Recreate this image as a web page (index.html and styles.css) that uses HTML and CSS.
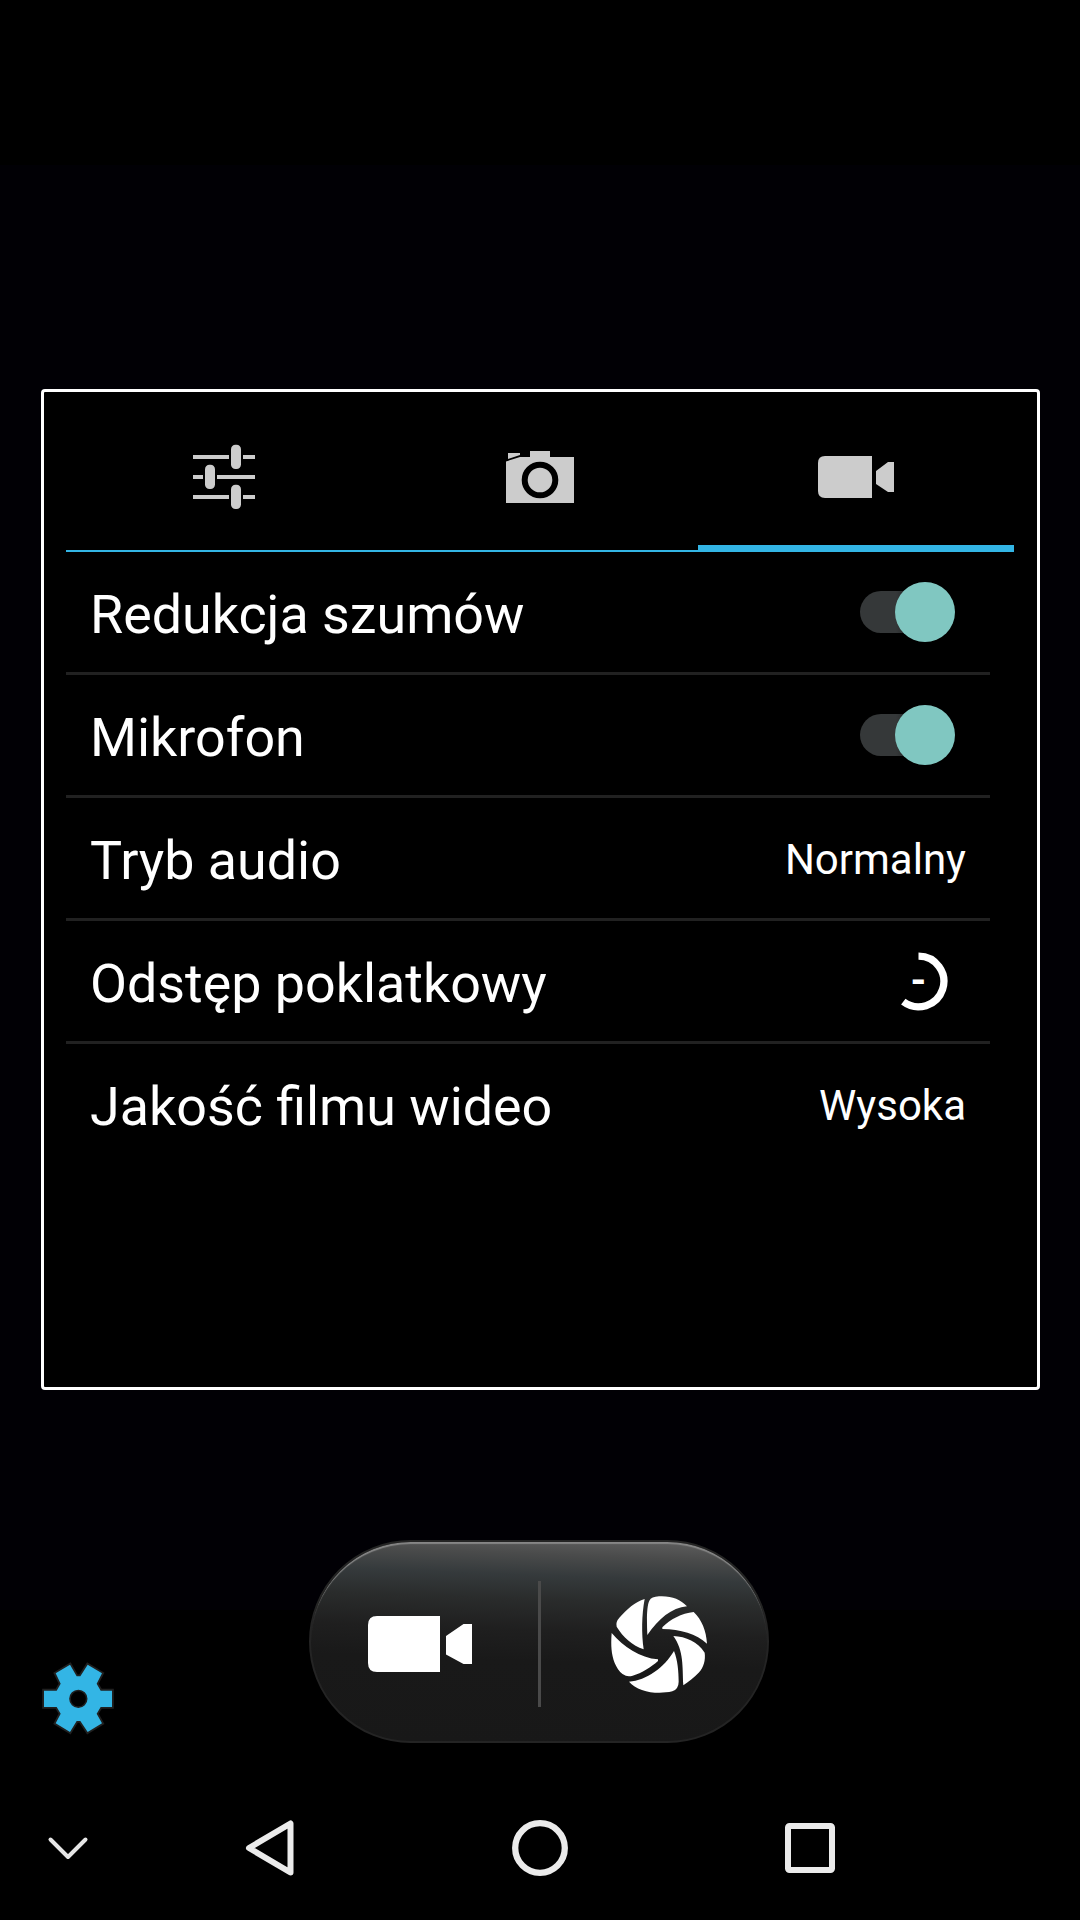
FILE: index.html
```html
<!DOCTYPE html>
<html lang="pl">
<head>
    <meta charset="UTF-8">
    <meta name="viewport" content="width=device-width, initial-scale=1.0">
    <title>Aparat</title>
    <link rel="stylesheet" href="styles.css">
</head>
<body>
    <main class="camera">
        <section class="panel">
            <div class="tabs">
                <div class="tab">
                    <svg width="62" height="66" viewBox="0 0 62 66" fill="#cccccc">
                        <path d="M0 11h36v4H0zM50 11h12v4H50zM0 31h10v4H0zM24 31h38v4H24zM0 51h36v4H0zM50 51h12v4H50z"/>
                        <rect x="38" y="0.7" width="10" height="24.3" rx="4.5"/>
                        <rect x="12" y="20.7" width="10" height="24.3" rx="4.5"/>
                        <rect x="38" y="40.7" width="10" height="24.3" rx="4.5"/>
                    </svg>
                </div>
                <div class="tab">
                    <svg class="photo" width="68" height="52" viewBox="0 0 68 52" fill="#cccccc">
                        <path d="M2 2h12v2L2 8zM0 10.500L14 6H24V0H44V6H68V52H0z"/>
                        <circle cx="34" cy="29" r="15.300" stroke="#000" stroke-width="6"/>
                    </svg>
                </div>
                <div class="tab active">
                    <svg width="76" height="42" viewBox="0 0 76 42" fill="#cccccc">
                        <path d="M7 0H54V42H7Q0 42 0 35V7Q0 0 7 0zM58 15L70 6H76V36H70L58 28z"/>
                    </svg>
                </div>
            </div>
            <div class="settings">
                <div class="row">
                    <span class="label">Redukcja szumów</span>
                    <span class="toggle"><span class="thumb"></span></span>
                </div>
                <div class="row">
                    <span class="label">Mikrofon</span>
                    <span class="toggle"><span class="thumb"></span></span>
                </div>
                <div class="row">
                    <span class="label">Tryb audio</span>
                    <span class="value">Normalny</span>
                </div>
                <div class="row">
                    <span class="label">Odstęp poklatkowy</span>
                    <svg class="dial" width="60" height="60" viewBox="0 0 60 60">
                        <path d="M30.500 5.200A25.300 25.300 0 1 1 15.300 50.700" fill="none" stroke="#fff" stroke-width="7.300"/>
                        <text class="dial-text" x="30.300" y="43" text-anchor="middle">-</text>
                    </svg>
                </div>
                <div class="row">
                    <span class="label">Jakość filmu wideo</span>
                    <span class="value">Wysoka</span>
                </div>
            </div>
        </section>

        <div class="controls">
            <svg class="gear" width="73" height="73" viewBox="66 66 219 219">
                <path d="M72 152H110L122 131L107 100L150 74L170 109H181L203 74L246 100L230 131L242 152H276V201H242L230 221L246 250L203 276L181 243H170L150 276L107 250L122 221L110 201H72z" fill="#33b5e5" stroke="#202020" stroke-width="11" paint-order="stroke"/>
                <circle cx="175" cy="176.500" r="25" fill="#000" stroke="#202020" stroke-width="5"/>
            </svg>
            <div class="shutter">
                <svg class="record" width="104" height="56" viewBox="0 0 104 56" fill="#fff">
                    <path d="M9 0H72V56H9Q0 56 0 47V9Q0 0 9 0zM78 20L95.500 8H104V48H95.500L78 38.500z"/>
                </svg>
                <span class="divider"></span>
                <svg class="aperture" width="96" height="97" viewBox="243 228 288 291" fill="#fff">
                    <path d="M352 345C350 300 350 258 358 242Q364 230 387 229C425 227 450 238 471 259C425 263 385 297 352 345z"/>
                    <path d="M397 322C420 298 455 280 491 276C515 299 529 332 531 371C499 342 452 328 397 327z"/>
                    <path d="M430 348C468 350 503 365 524 398C527 420 521 442 506 458C492 473 476 485 460 496C457 440 462 392 430 348z"/>
                    <path d="M432 393C443 420 446 455 446 485Q446 507 427 514C380 525 322 515 297 485C350 481 402 443 432 393z"/>
                    <path d="M245 339C280 380 330 414 384 418V423C365 440 335 460 308 467Q282 475 264 448C243 415 242 378 245 339z"/>
                    <path d="M344 237C335 285 334 340 341 388C307 377 279 351 260 320Q256 306 268 293C290 269 315 245 344 237z"/>
                </svg>
            </div>
        </div>

        <nav class="navbar">
            <svg width="44" height="26" viewBox="0 0 44 26" fill="none" stroke="#e6e6e6" stroke-width="4" stroke-linecap="round" stroke-linejoin="round">
                <path d="M4.500 4.500L22 22L39.500 4.500"/>
            </svg>
            <svg width="50" height="58" viewBox="0 0 50 58" fill="none" stroke="#ebebeb" stroke-width="6" stroke-linejoin="round">
                <path d="M4 29L45.500 4.500V53.500z"/>
            </svg>
            <svg width="58" height="58" viewBox="0 0 58 58" fill="none" stroke="#ebebeb" stroke-width="6.300">
                <circle cx="29" cy="29" r="24.800"/>
            </svg>
            <svg width="50" height="50" viewBox="0 0 50 50" fill="none" stroke="#ebebeb" stroke-width="6">
                <rect x="3" y="3" width="44" height="44" rx="1.500"/>
            </svg>
        </nav>
    </main>
</body>
</html>
```

FILE: styles.css
```css
* {
    box-sizing: border-box;
}
body {
    margin: 0;
    background-color: #000;
    color: #fff;
    font-family: Roboto, sans-serif;
}
svg {
    display: block;
}
.camera {
    display: flex;
    flex-direction: column;
    width: 1080px;
    height: 1920px;
    padding-top: 389px;
    background: linear-gradient(#000 165px, #010005 165px, #010005 1610px, #000 1610px);
}
.panel {
    width: 999px;
    height: 1001px;
    margin-left: 41px;
    padding: 0 22px;
    border: 3px solid #fff;
    border-radius: 4px;
    background-color: #000;
}
.tabs {
    display: grid;
    grid-template-columns: repeat(3, 316px);
    height: 160px;
}
.tab {
    display: flex;
    justify-content: center;
    align-items: center;
    padding-top: 12px;
    border-bottom: 2px solid #33b5e5;
}
.tab.active {
    padding-top: 17px;
    border-bottom-width: 7px;
}
.settings {
    width: 924px;
}
.row {
    display: flex;
    justify-content: space-between;
    align-items: center;
    height: 123px;
    padding: 0 24px;
    border-bottom: 3px solid #212121;
}
.row:last-child {
    border-bottom: none;
    height: 120px;
}
.label {
    padding-top: 6px;
    font-size: 53.8px;
    line-height: 64px;
}
.value {
    padding-top: 3px;
    font-size: 42px;
}
.toggle {
    display: flex;
    justify-content: flex-end;
    align-items: center;
    width: 96px;
    height: 42px;
    margin-right: 10px;
    border-radius: 21px;
    background: linear-gradient(to right, #353839 36px, #2c2f30 42px, #000 75px);
}
.thumb {
    width: 60px;
    height: 60px;
    margin-right: 0.6px;
    border-radius: 50%;
    background-color: #80c7c1;
}
.dial {
    margin-right: 18px;
}
.dial-text {
    fill: #fff;
    font-size: 40px;
    font-weight: bold;
}
.controls {
    display: flex;
    align-items: flex-start;
    height: 203px;
    margin-top: 150px;
    padding-left: 42px;
}
.gear {
    margin-top: 122px;
}
.shutter {
    display: flex;
    align-items: center;
    width: 460px;
    height: 203px;
    margin-left: 194px;
    padding: 4px 59px 0 57px;
    border: 2px solid #242424;
    border-radius: 102px;
    background: linear-gradient(182deg, #5c5c5c 4px, #4a4b4b 20px, #353a3c 41px, #2a2c2c 65px, #1f1f1f 96px, #191919 127px, #181818 100%);
    box-shadow: inset 0 3px 1px -1px #868686;
}
.divider {
    width: 3px;
    height: 126px;
    margin: 0 70px 0 66px;
    background-color: #4a4a4a;
}
.aperture {
    margin-top: 2px;
}
.navbar {
    display: grid;
    grid-template-columns: 135px 270px 270px 270px;
    justify-items: center;
    align-items: center;
    height: 144px;
    margin-top: 33px;
}
```
